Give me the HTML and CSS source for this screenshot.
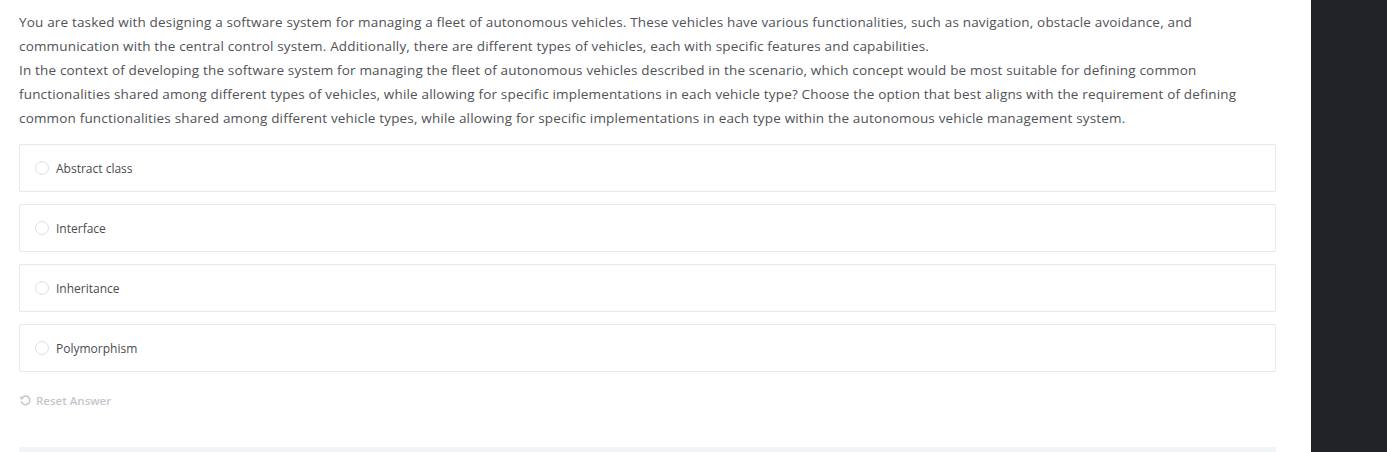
FILE: index.html
```html
<!DOCTYPE html>
<html>
<head>
<meta charset="utf-8">
<link rel="stylesheet" href="styles.css">
</head>
<body>
<div class="layout">
  <main class="content">
    <div class="question">
      <p>You are tasked with designing a software system for managing a fleet of autonomous vehicles. These vehicles have various functionalities, such as navigation, obstacle avoidance, and communication with the central control system. Additionally, there are different types of vehicles, each with specific features and capabilities.</p>
      <p>In the context of developing the software system for managing the fleet of autonomous vehicles described in the scenario, which concept would be most suitable for defining common functionalities shared among different types of vehicles, while allowing for specific implementations in each vehicle type? Choose the option that best aligns with the requirement of defining common functionalities shared among different vehicle types, while allowing for specific implementations in each type within the autonomous vehicle management system.</p>
    </div>
    <div class="options">
      <label class="option"><span class="radio"></span><span class="label">Abstract class</span></label>
      <label class="option"><span class="radio"></span><span class="label">Interface</span></label>
      <label class="option"><span class="radio"></span><span class="label">Inheritance</span></label>
      <label class="option"><span class="radio"></span><span class="label">Polymorphism</span></label>
    </div>
    <div class="reset">
      <svg class="reset-icon" width="13" height="13" viewBox="0 0 16 16"><path d="M4.2 4.2A5.3 5.3 0 1 1 3 9.5" fill="none" stroke="#c3c7cb" stroke-width="1.8" stroke-linecap="round"/><path d="M1.5 2.5 L1.8 6.8 L6 6.2 Z" fill="#c3c7cb"/></svg>
      <span>Reset Answer</span>
    </div>
    <div class="footer-bar"></div>
  </main>
  <aside class="sidebar"></aside>
</div>
</body>
</html>
```
FILE: styles.css
```css
html, body {
  margin: 0;
  padding: 0;
  background: #ffffff;
  height: 100%;
  overflow: hidden;
}
body {
  font-family: "Open Sans", "Liberation Sans", Arial, sans-serif;
  color: #555659;
}
.layout {
  display: flex;
  height: 452px;
}
.content {
  width: 1257px;
  margin-left: 19px;
  padding-top: 10px;
  display: flex;
  flex-direction: column;
}
.sidebar {
  margin-left: auto;
  width: 76px;
  background: #222327;
}
.question p {
  margin: 0;
  font-size: 13.5px;
  line-height: 24px;
  letter-spacing: 0.17px;
  color: #505257;
}
.options {
  margin-top: 14px;
  display: flex;
  flex-direction: column;
  gap: 12px;
}
.option {
  display: flex;
  align-items: center;
  height: 46px;
  border: 1px solid #e8e9eb;
  border-radius: 2px;
  padding-left: 15px;
}
.radio {
  width: 12px;
  height: 12px;
  border: 1px solid #dcdee1;
  border-radius: 50%;
  margin-right: 7px;
  background: #fff;
}
.label {
  font-size: 12px;
  color: #4a4c50;
}
.reset {
  margin-top: 21px;
  display: flex;
  align-items: center;
  gap: 4px;
  font-size: 11.5px;
  font-weight: 600;
  color: #c3c7cb;
}
.footer-bar {
  margin-top: 39px;
  height: 6px;
  background: #f2f5f6;
}
```
